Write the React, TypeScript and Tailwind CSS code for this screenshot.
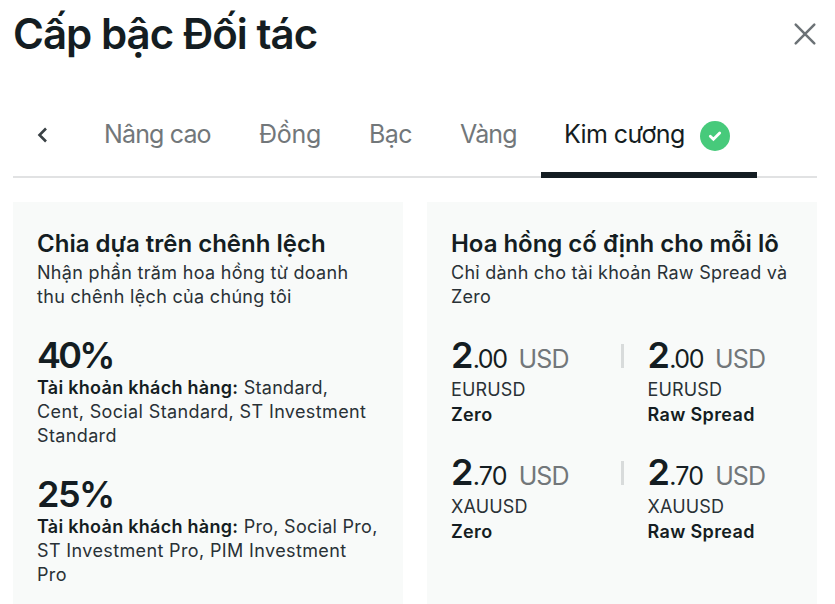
const tabs = [
  { name: "Nâng cao", className: "ml-[55px] w-[107px] tracking-[-0.85px]" },
  { name: "Đồng", className: "ml-12 w-[62px] tracking-[-0.3px]" },
  { name: "Bạc", className: "ml-12 w-[43px] tracking-[-0.6px]" },
  { name: "Vàng", className: "ml-12 w-[57px] tracking-[-0.85px]" },
];

const shares = [
  {
    percent: "40%",
    className: "tracking-[-2.7px]",
    label: "Tài khoản khách hàng:",
    lines: ["Standard,", "Cent, Social Standard, ST Investment", "Standard"],
  },
  {
    percent: "25%",
    className: "tracking-[-1.5px]",
    label: "Tài khoản khách hàng:",
    lines: ["Pro, Social Pro,", "ST Investment Pro, PIM Investment", "Pro"],
  },
];

const commissions = [
  { whole: "2", cents: ".00", symbol: "EURUSD", className: "tracking-[-1.4px]" },
  { whole: "2", cents: ".70", symbol: "XAUUSD", className: "tracking-[-0.8px]" },
];

const accounts = ["Zero", "Raw Spread"];

export default function App() {
  return (
    <div className="h-[604px] w-[835px] overflow-hidden bg-white pl-[13px] pr-[18px] font-['Inter',sans-serif] text-[#141d22]">
      <header className="flex h-[88px] items-start justify-between">
        <h1 className="pt-[8px] text-[42px] leading-[52px] font-semibold tracking-[-0.97px] whitespace-nowrap">
          Cấp bậc Đối tác
        </h1>
        <svg
          className="mt-[22px] size-6"
          viewBox="0 0 24 24"
          fill="none"
          stroke="#6c7276"
          strokeWidth="2.5"
          strokeLinecap="round"
        >
          <path d="M2.700 2.700l18.600 18.600M21.300 2.700L2.700 21.300" />
        </svg>
      </header>

      <nav className="flex h-[90px] items-stretch border-b-2 border-[#e1e2e3] text-[25px] text-[#72777a]">
        <button className="ml-[23px] flex w-[13px] items-center pt-[6px]">
          <svg className="h-4 w-3" viewBox="0 0 12 16" fill="none" stroke="#3a4145" strokeWidth="2.6">
            <path d="M10 1.5L3.500 8l6.500 6.500" />
          </svg>
        </button>
        {tabs.map((tab) => (
          <button key={tab.name} className={`${tab.className} pt-[5px] text-left whitespace-nowrap`}>
            {tab.name}
          </button>
        ))}
        <button className="-mb-0.5 ml-6 flex w-[216px] items-center border-b-[6px] border-[#141d22] pt-3 pl-[23px] text-[#141d22]">
          <span className="-mt-0.5 w-[136px] text-left tracking-[-0.6px] whitespace-nowrap">Kim cương</span>
          <span className="flex size-[30px] items-center justify-center rounded-full bg-[#47ca7b]">
            <svg
              className="size-3.5"
              viewBox="0 0 14 14"
              fill="none"
              stroke="white"
              strokeWidth="2.8"
              strokeLinecap="round"
            >
              <path d="M2.300 7.300l3.100 3L11.700 4" />
            </svg>
          </span>
        </button>
      </nav>

      <main className="mt-6 grid grid-cols-2 gap-6">
        <section className="h-[402px] bg-[#f8faf9] px-6 pt-[27px]">
          <h2 className="text-2xl leading-[30px] font-semibold whitespace-nowrap">
            Chia dựa trên chênh lệch
          </h2>
          <p className="mt-0.5 text-lg leading-6 tracking-[0.31px] whitespace-nowrap text-[#293136]">
            Nhận phần trăm hoa hồng từ doanh
            <br />
            thu chênh lệch của chúng tôi
          </p>
          {shares.map((share) => (
            <div key={share.percent} className="mt-[26px]">
              <p className={`${share.className} text-4xl leading-10 font-semibold`}>{share.percent}</p>
              <p className="mt-px text-lg leading-6 tracking-[0.37px] whitespace-nowrap text-[#293136]">
                <span className="tracking-[0.28px]">
                  <strong className="font-semibold text-[#141d22]">{share.label}</strong> {share.lines[0]}
                </span>
                <br />
                {share.lines[1]}
                <br />
                {share.lines[2]}
              </p>
            </div>
          ))}
        </section>

        <section className="h-[402px] bg-[#f8faf9] px-6 pt-[27px]">
          <h2 className="text-2xl leading-[30px] font-semibold tracking-[-0.03px] whitespace-nowrap">
            Hoa hồng cố định cho mỗi lô
          </h2>
          <p className="mt-0.5 text-lg leading-6 tracking-[0.24px] whitespace-nowrap text-[#293136]">
            Chỉ dành cho tài khoản Raw Spread và
            <br />
            Zero
          </p>
          <div className="mt-[26px] flex flex-col gap-[27px]">
            {commissions.map((item) => (
              <div key={item.symbol} className="grid h-[90px] grid-cols-[170px_1fr]">
                {accounts.map((account, index) => (
                  <div key={account} className="flex">
                    {index === 1 && <span className="mt-[9px] mr-[23.500px] h-6 w-[3px] bg-[#d8dbdb]" />}
                    <div className="whitespace-nowrap">
                      <p className="text-[25px] leading-[39px]">
                        <span className="text-4xl font-semibold tracking-[-0.8px]">{item.whole}</span>
                        <span className={item.className}>{item.cents}</span>
                        <span className="ml-3 tracking-[-0.9px] text-[#72777a]">USD</span>
                      </p>
                      <p className="-mt-px text-lg leading-6 tracking-[0.15px] text-[#293136]">{item.symbol}</p>
                      <p className="text-lg leading-[26px] font-semibold tracking-[0.35px]">{account}</p>
                    </div>
                  </div>
                ))}
              </div>
            ))}
          </div>
        </section>
      </main>
    </div>
  );
}
